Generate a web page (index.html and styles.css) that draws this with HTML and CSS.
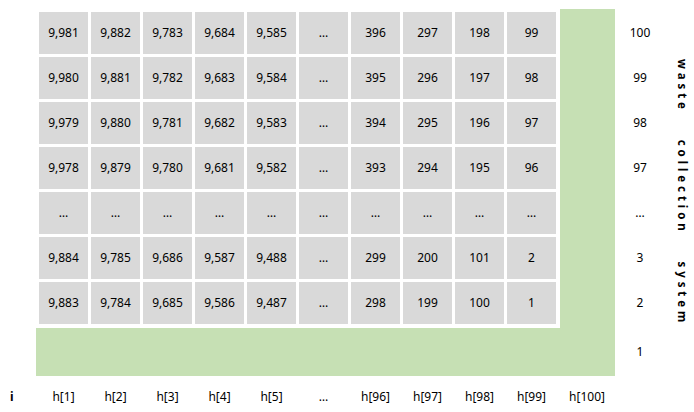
FILE: index.html
```html
<!DOCTYPE html>
<html lang="en">
<head>
<meta charset="utf-8">
<title>Waste collection system</title>
<link rel="stylesheet" href="styles.css">
</head>
<body>
<div class="page">
  <div class="board">
    <div class="panel">
      <div class="cell">9,981</div><div class="cell">9,882</div><div class="cell">9,783</div><div class="cell">9,684</div><div class="cell">9,585</div><div class="cell">…</div><div class="cell">396</div><div class="cell">297</div><div class="cell">198</div><div class="cell">99</div>
      <div class="cell">9,980</div><div class="cell">9,881</div><div class="cell">9,782</div><div class="cell">9,683</div><div class="cell">9,584</div><div class="cell">…</div><div class="cell">395</div><div class="cell">296</div><div class="cell">197</div><div class="cell">98</div>
      <div class="cell">9,979</div><div class="cell">9,880</div><div class="cell">9,781</div><div class="cell">9,682</div><div class="cell">9,583</div><div class="cell">…</div><div class="cell">394</div><div class="cell">295</div><div class="cell">196</div><div class="cell">97</div>
      <div class="cell">9,978</div><div class="cell">9,879</div><div class="cell">9,780</div><div class="cell">9,681</div><div class="cell">9,582</div><div class="cell">…</div><div class="cell">393</div><div class="cell">294</div><div class="cell">195</div><div class="cell">96</div>
      <div class="cell">…</div><div class="cell">…</div><div class="cell">…</div><div class="cell">…</div><div class="cell">…</div><div class="cell">…</div><div class="cell">…</div><div class="cell">…</div><div class="cell">…</div><div class="cell">…</div>
      <div class="cell">9,884</div><div class="cell">9,785</div><div class="cell">9,686</div><div class="cell">9,587</div><div class="cell">9,488</div><div class="cell">…</div><div class="cell">299</div><div class="cell">200</div><div class="cell">101</div><div class="cell">2</div>
      <div class="cell">9,883</div><div class="cell">9,784</div><div class="cell">9,685</div><div class="cell">9,586</div><div class="cell">9,487</div><div class="cell">…</div><div class="cell">298</div><div class="cell">199</div><div class="cell">100</div><div class="cell">1</div>
    </div>
  </div>

  <div class="rowlabels">
    <div class="rl">100</div>
    <div class="rl">99</div>
    <div class="rl">98</div>
    <div class="rl">97</div>
    <div class="rl">…</div>
    <div class="rl">3</div>
    <div class="rl">2</div>
    <div class="rl rl-last">1</div>
  </div>

  <div class="vtitle">waste collection system</div>

  <div class="ilabel">i</div>
  <div class="collabels">
    <div class="cl">h[1]</div>
    <div class="cl">h[2]</div>
    <div class="cl">h[3]</div>
    <div class="cl">h[4]</div>
    <div class="cl">h[5]</div>
    <div class="cl">…</div>
    <div class="cl">h[96]</div>
    <div class="cl">h[97]</div>
    <div class="cl">h[98]</div>
    <div class="cl">h[99]</div>
    <div class="cl">h[100]</div>
  </div>
</div>
</body>
</html>
```

FILE: styles.css
```css
html, body {
  margin: 0;
  padding: 0;
  background: #ffffff;
}

body {
  font-family: "Noto Sans", "Open Sans", sans-serif;
  font-size: 12px;
  color: #000000;
  width: 694px;
  height: 412px;
  overflow: hidden;
}

.page {
  display: grid;
  grid-template-columns: 36px 579px 50px 29px;
  grid-template-rows: 367px 36px;
  padding-top: 9px;
}

.board {
  grid-column: 2;
  grid-row: 1;
  display: grid;
  grid-template-columns: 524px 55px;
  grid-template-rows: 319px 48px;
  background: #c6e0b4;
}

.panel {
  grid-column: 1;
  grid-row: 1;
  background: #ffffff;
  display: grid;
  grid-template-columns: repeat(10, 49px);
  grid-auto-rows: 42px;
  gap: 3px;
  padding: 3px 4px 4px 3px;
}

.cell {
  background: #d9d9d9;
  display: flex;
  align-items: center;
  justify-content: center;
  line-height: 16px;
}

.rowlabels {
  grid-column: 3;
  grid-row: 1;
  display: flex;
  flex-direction: column;
  gap: 3px;
  padding-top: 3px;
}

.rl {
  height: 42px;
  display: flex;
  align-items: center;
  justify-content: center;
  line-height: 16px;
}

.rl-last {
  height: 48px;
  margin-top: 1px;
}

.vtitle {
  grid-column: 4;
  grid-row: 1;
  align-self: center;
  justify-self: center;
  writing-mode: vertical-rl;
  font-weight: bold;
  font-size: 11.5px;
  letter-spacing: 3.9px;
  word-spacing: 20px;
  line-height: 14px;
  margin-left: 5px;
}

.ilabel {
  grid-column: 1;
  grid-row: 2;
  padding-left: 10px;
  padding-top: 13px;
  line-height: 16px;
  font-weight: bold;
}

.collabels {
  grid-column: 2;
  grid-row: 2;
  display: grid;
  grid-template-columns: repeat(10, 49px) 56px;
  column-gap: 3px;
  padding-left: 3px;
  padding-top: 13px;
  line-height: 16px;
}

.cl {
  text-align: center;
}
```
